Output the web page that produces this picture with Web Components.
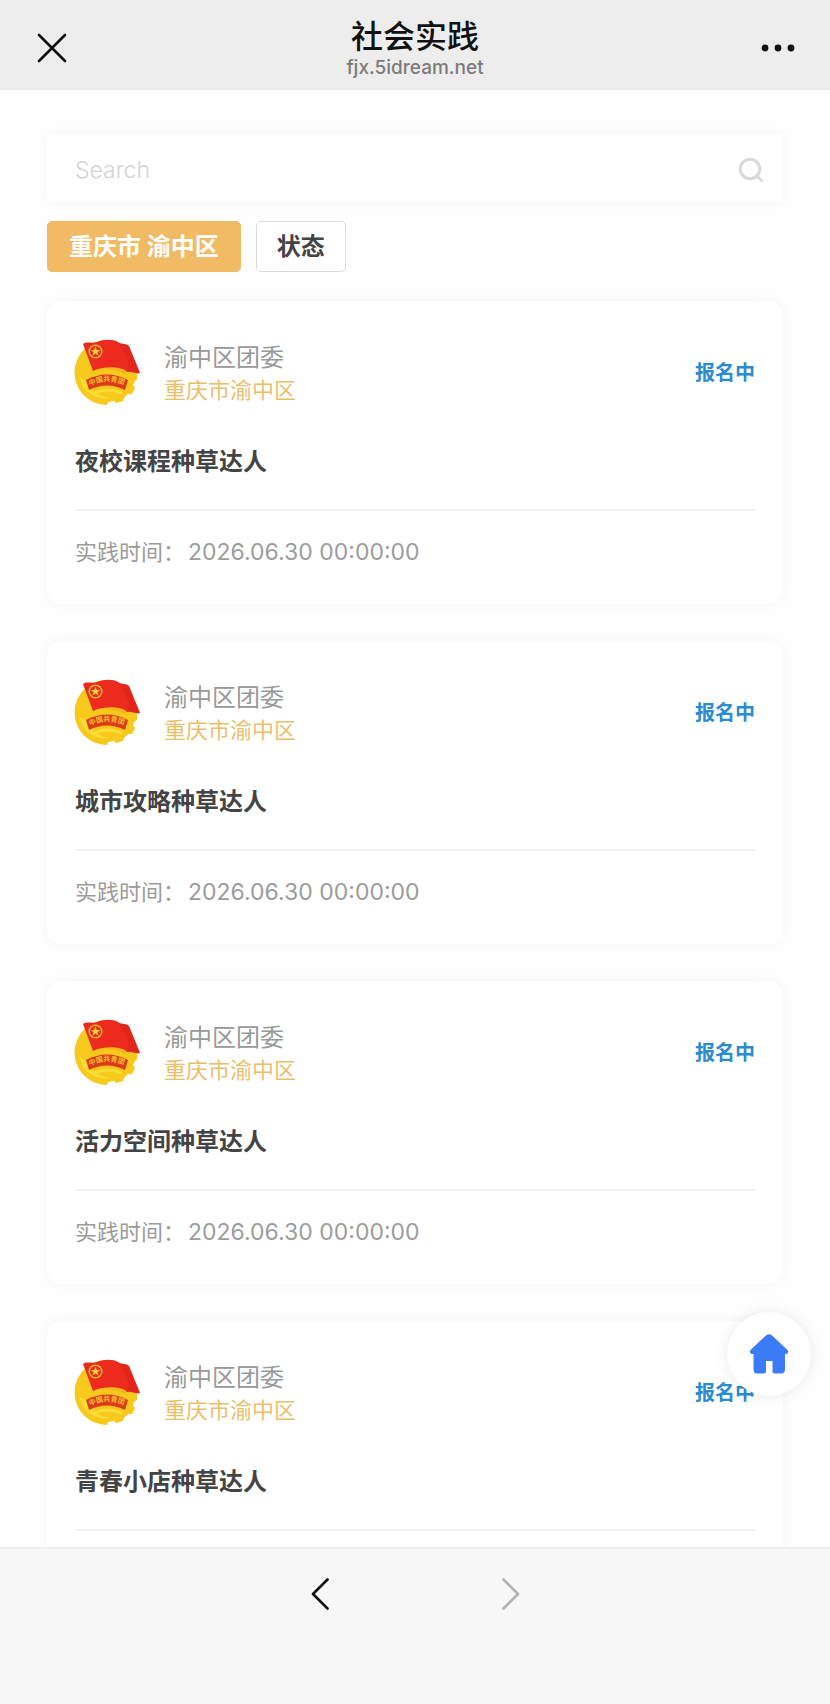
<!DOCTYPE html>
<html lang="zh-CN">
<head>
<meta charset="utf-8">
<meta name="viewport" content="width=device-width, initial-scale=1">
<title>社会实践</title>
<style>
  body {
    margin: 0;
    background: #fefefe;
    color: #333;
    font-family: Inter, "Noto Sans CJK SC", sans-serif;
  }
</style>
</head>
<body>
<app-shell>
  <nav-header slot="header" heading="社会实践" host="fjx.5idream.net"></nav-header>
  <search-field></search-field>
  <filter-bar>
    <filter-tag active>重庆市 渝中区</filter-tag>
    <filter-tag>状态</filter-tag>
  </filter-bar>
  <practice-card org="渝中区团委" area="重庆市渝中区" status="报名中" time="2026.06.30 00:00:00">夜校课程种草达人</practice-card>
  <practice-card org="渝中区团委" area="重庆市渝中区" status="报名中" time="2026.06.30 00:00:00">城市攻略种草达人</practice-card>
  <practice-card org="渝中区团委" area="重庆市渝中区" status="报名中" time="2026.06.30 00:00:00">活力空间种草达人</practice-card>
  <practice-card org="渝中区团委" area="重庆市渝中区" status="报名中" time="2026.06.30 00:00:00">青春小店种草达人</practice-card>
  <home-button slot="float"></home-button>
  <history-bar slot="footer"></history-bar>
</app-shell>

<script>
const define = (name, render) => customElements.define(name, class extends HTMLElement {
  connectedCallback() {
    if (this.shadowRoot) return;
    const tpl = document.createElement('template');
    tpl.innerHTML = render(this);
    this.attachShadow({ mode: 'open' }).append(tpl.content.cloneNode(true));
  }
});

define('app-shell', () => `
  <style>
    :host { display: grid; grid-template-rows: auto minmax(0, 1fr) auto; height: 100vh; }
    .view { position: relative; min-height: 0; }
    main { box-sizing: border-box; height: 100%; overflow-y: auto; scrollbar-width: none; padding: 44px 47px; }
  </style>
  <slot name="header"></slot>
  <div class="view">
    <main><slot></slot></main>
    <slot name="float"></slot>
  </div>
  <slot name="footer"></slot>`);

define('nav-header', el => `
  <style>
    :host { display: block; background: #ededed; }
    header { display: grid; grid-template-columns: 48px 1fr 48px; align-items: center; padding: 17px 28px 11px; }
    button { display: grid; place-items: center; width: 48px; height: 48px; padding: 0; border: 0; background: none; color: #111; }
    .titles { text-align: center; }
    h1 { margin: 0; font-size: 32px; line-height: 40px; font-weight: 500; color: #111; }
    p { margin: 0; font-size: 19px; line-height: 22px; font-weight: 500; color: #7b7b7b; }
  </style>
  <header>
    <button type="button" aria-label="关闭">
      <svg width="30" height="30" viewBox="0 0 30 30" fill="none" stroke="currentColor" stroke-width="2.6" stroke-linecap="round"><path d="M2 2 28 28M28 2 2 28"/></svg>
    </button>
    <div class="titles">
      <h1>${el.getAttribute('heading')}</h1>
      <p>${el.getAttribute('host')}</p>
    </div>
    <button type="button" aria-label="更多">
      <svg width="34" height="8" viewBox="0 0 34 8" fill="currentColor"><circle cx="4" cy="4" r="3.4"/><circle cx="17" cy="4" r="3.4"/><circle cx="30" cy="4" r="3.4"/></svg>
    </button>
  </header>`);

define('search-field', () => `
  <style>
    :host { display: block; }
    form { box-sizing: border-box; display: flex; align-items: center; height: 68px; padding: 3px 19px 0 28px; background: #fff; box-shadow: 0 0 10px rgba(0, 0, 0, .04); }
    input { flex: 1; min-width: 0; padding: 0; border: 0; outline: 0; background: none; font: 300 23px/28px Inter, "Noto Sans CJK SC", sans-serif; color: #333; }
    input::placeholder { color: #d4d4d4; opacity: 1; }
    button { padding: 0; border: 0; background: none; color: #d9d9d9; line-height: 0; }
  </style>
  <form role="search" onsubmit="return false">
    <input type="text" placeholder="Search" aria-label="Search">
    <button type="submit" aria-label="搜索">
      <svg width="26" height="26" viewBox="0 0 26 26" fill="none" stroke="currentColor" stroke-width="3"><circle cx="12" cy="12" r="9.8"/><path d="m18.5 18.5 6 6"/></svg>
    </button>
  </form>`);

define('filter-bar', () => `
  <style>
    :host { display: flex; gap: 15px; margin: 19px 0 29px; }
  </style>
  <slot></slot>`);

define('filter-tag', () => `
  <style>
    :host { display: block; }
    button { display: block; height: 51px; padding: 0 20px; border: 1px solid #dcdcdc; border-radius: 5px; background: #fff; color: #444; font: 700 24px/32px Inter, "Noto Sans CJK SC", sans-serif; white-space: nowrap; }
    :host([active]) button { padding: 0 21px; border-color: #f1bb66; background: #f1bb66; color: #fff; }
  </style>
  <button type="button"><slot></slot></button>`);

define('league-badge', () => `
  <style>
    :host { display: block; width: 66px; height: 66px; }
    svg { display: block; overflow: visible; }
    text { font: 700 7px "Noto Sans CJK SC", sans-serif; }
  </style>
  <svg width="66" height="66" viewBox="0 0 66 66" role="img" aria-label="团徽">
    <path fill="#f6c91c" d="M32 0A32 32 0 1 0 32 65L33 62 39 61 41 63 48 61 49 58 53 54 57 54 60 48 58 45 60 41 62 40V28Z"/>
    <path fill="#f9dc34" d="M4 36C8 53 20 60 36 58 24 57 15 50 13 42Z"/>
    <path fill="none" stroke="#f3b71d" stroke-width="3" d="M17 30Q33 24 51 33"/>
    <path fill="none" stroke="#f9dc34" stroke-width="3" d="M19 53Q33 47 47 53"/>
    <path fill="#ec2a1e" d="M8 4C12 1 16 4 22 2 30-1 38-1 43 2 47 5 51 3 54 6L65 33C60 34 57 31 52 32 47 26 27 26 18 31Z"/>
    <path fill="#c91b17" d="M43 2C47 5 51 3 54 6L65 33C60 34 57 31 52 32L54 22Z" opacity=".25"/>
    <circle cx="20.500" cy="11.500" r="6.300" fill="none" stroke="#f6b82b" stroke-width="1.600"/>
    <path fill="#f9d331" d="m20.500 6.500 1.300 3.500h3.600l-2.900 2.200 1.100 3.600-3.100-2.200-3.100 2.200 1.100-3.600-2.900-2.200h3.600Z"/>
    <path fill="#dc3a1b" d="M11 40Q32 29 53 40L50 50Q32 41 14 50Z"/>
    <path id="band" fill="none" d="M15 46Q32 37 52 46"/>
    <text fill="#f7bf2b"><textPath href="#band">中国共青团</textPath></text>
  </svg>`);

define('practice-card', el => `
  <style>
    :host { display: block; margin-bottom: 37px; }
    article { padding: 39px 28px 36px; border-radius: 14px; background: #fff; box-shadow: 0 0 12px rgba(0, 0, 0, .04); }
    .top { display: flex; align-items: center; gap: 23px; }
    .who { flex: 1; min-width: 0; padding-top: 2px; }
    p { margin: 0; }
    .org { font-size: 24px; line-height: 32px; color: #999; }
    .area { font-size: 22px; line-height: 32px; color: #eabf6c; }
    .status { font-size: 20px; line-height: 28px; font-weight: 700; color: #2b8bd0; }
    h2 { margin: 38px 0 29px; font-size: 24px; line-height: 36px; font-weight: 700; color: #444; }
    .time { padding-top: 25px; border-top: 2px solid #f1f1f1; font-size: 22px; line-height: 32px; color: #9c9c9c; }
    time { margin-left: 3px; font-size: 23px; }
  </style>
  <article>
    <div class="top">
      <league-badge></league-badge>
      <div class="who">
        <p class="org">${el.getAttribute('org')}</p>
        <p class="area">${el.getAttribute('area')}</p>
      </div>
      <span class="status">${el.getAttribute('status')}</span>
    </div>
    <h2><slot></slot></h2>
    <p class="time">实践时间：<time>${el.getAttribute('time')}</time></p>
  </article>`);

define('home-button', () => `
  <style>
    :host { position: absolute; right: 19px; bottom: 151px; }
    button { display: grid; place-items: center; width: 84px; height: 84px; padding: 0; border: 0; border-radius: 50%; background: #fff; color: #3b7bf6; box-shadow: 0 0 14px rgba(0, 0, 0, .09); }
  </style>
  <button type="button" aria-label="首页">
    <svg width="40" height="40" viewBox="0 0 40 40" fill="currentColor"><path d="M17 1.500Q20-.8 23 1.500L38.500 16Q40 18 38 19.700L36 20V35Q36 39.500 32 39.500H26Q23.500 39.500 23.500 37.500V27H17V37.500Q17 39.500 15 39.500H8Q4.500 39.500 4.500 35V20L2 19.700Q0 18 1.500 16Z"/></svg>
  </button>`);

define('history-bar', () => `
  <style>
    :host { display: block; background: #f7f7f7; border-top: 2px solid #f0f0f0; }
    nav { display: flex; justify-content: center; gap: 143px; padding: 21px 0 86px; }
    button { display: grid; place-items: center; width: 48px; height: 48px; padding: 0; border: 0; background: none; color: #111; }
    button:disabled { color: #b2b2b2; }
  </style>
  <nav aria-label="浏览历史">
    <button type="button" aria-label="后退">
      <svg width="18" height="32" viewBox="0 0 18 32" fill="none" stroke="currentColor" stroke-width="2.600" stroke-linecap="round" stroke-linejoin="round"><path d="M16.500 1.500 2 16 16.500 30.500"/></svg>
    </button>
    <button type="button" aria-label="前进" disabled>
      <svg width="18" height="32" viewBox="0 0 18 32" fill="none" stroke="currentColor" stroke-width="2.600" stroke-linecap="round" stroke-linejoin="round"><path d="M1.500 1.500 16 16 1.500 30.500"/></svg>
    </button>
  </nav>`);
</script>
</body>
</html>
